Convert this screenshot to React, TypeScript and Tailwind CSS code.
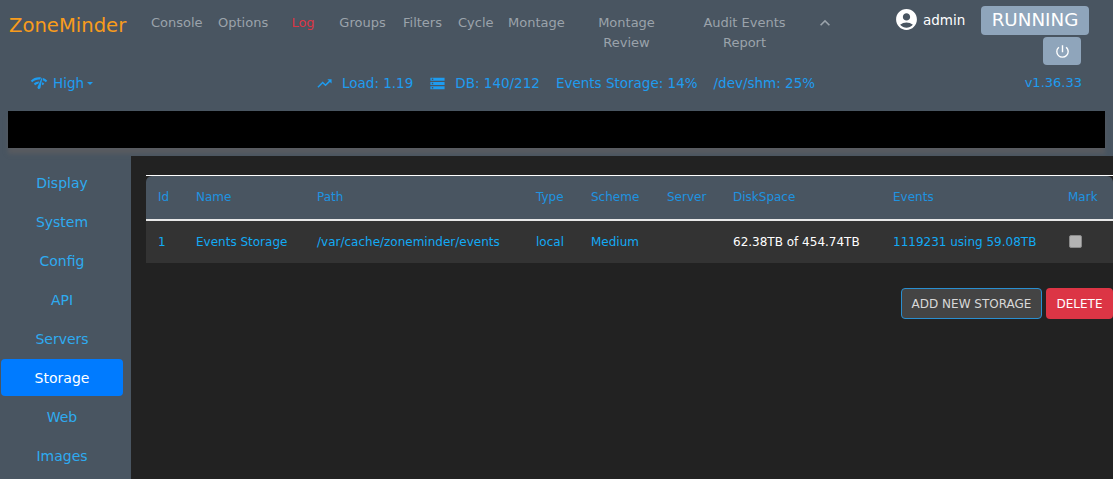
import { MdAccountCircle, MdExpandLess, MdNetworkCheck, MdPowerSettingsNew, MdStorage, MdTrendingUp } from "react-icons/md";

const navItems = [
  { label: "Console", cls: "w-[67px] text-[#9ba3ab]" },
  { label: "Options", cls: "w-[66px] text-[#9ba3ab]" },
  { label: "Log", cls: "w-[54px] text-[#dc3545]" },
  { label: "Groups", cls: "w-[65px] text-[#9ba3ab]" },
  { label: "Filters", cls: "w-[55px] text-[#9ba3ab]" },
  { label: "Cycle", cls: "w-[50px] text-[#9ba3ab]" },
  { label: "Montage", cls: "w-[72px] text-[#9ba3ab]" },
  { label: "Montage Review", cls: "w-[109px] text-[#9ba3ab]" },
  { label: "Audit Events Report", cls: "w-[127px] text-[#9ba3ab]" },
];

const sideItems = ["Display", "System", "Config", "API", "Servers", "Storage", "Web", "Images"];

const columns = [
  { label: "Id", cls: "w-[38px]" },
  { label: "Name", cls: "w-[121px]" },
  { label: "Path", cls: "w-[219px]" },
  { label: "Type", cls: "w-[55px]" },
  { label: "Scheme", cls: "w-[76px]" },
  { label: "Server", cls: "w-[66px]" },
  { label: "DiskSpace", cls: "w-[160px]" },
  { label: "Events", cls: "w-[175px]" },
  { label: "Mark", cls: "w-[57px]" },
];

const App = () => {
  return (
    <div className="w-[1113px] h-[479px] overflow-hidden bg-[#495561] text-[13px] font-['DejaVu_Sans',sans-serif]">
      <div className="h-[66px] flex">
        <div className="w-[143px] pl-[9px] pt-[13px] text-[19.6px] leading-[26px] text-[#f89c1c]">ZoneMinder</div>
        <div className="w-[753px] flex items-start pt-[13px]">
          {navItems.map((item) => (
            <div key={item.label} className={`${item.cls} shrink-0 px-2 text-center leading-[20px]`}>
              {item.label}
            </div>
          ))}
          <MdExpandLess className="ml-[7px] text-[#9ba3ab] shrink-0" size={20} />
        </div>
        <div className="flex-1 pt-[6px] pr-[24px] flex flex-col items-end gap-[2px]">
          <div className="flex items-center w-full">
            <MdAccountCircle className="text-white shrink-0 -mt-[2px] -ml-[2px]" size={25} />
            <span className="ml-[4px] mr-auto text-white text-[13.5px] -mt-[1px]">admin</span>
            <div className="h-[29px] w-[108px] rounded-[4px] bg-[#8fa5bb] text-white text-[18.3px] leading-[27px] text-center">RUNNING</div>
          </div>
          <div className="mr-[8px] h-[28px] w-[38px] rounded-[4px] bg-[#8fa5bb] flex items-center justify-center">
            <MdPowerSettingsNew className="text-white" size={17} />
          </div>
        </div>
      </div>

      <div className="h-[34px] flex items-center text-[#1e9cf0] text-[13.5px]">
        <div className="w-[316px] pl-[30px] flex items-center">
          <MdNetworkCheck size={18} />
          <span className="ml-[5px]">High</span>
          <span className="ml-[3px] border-x-[3px] border-t-[3px] border-x-transparent border-t-[#1e9cf0]"></span>
        </div>
        <div className="flex items-center flex-1">
          <MdTrendingUp size={17} />
          <span className="ml-[9px]">Load: 1.19</span>
          <MdStorage className="ml-[16px]" size={17} />
          <span className="ml-[9px]">DB: 140/212</span>
          <span className="ml-[16px]">Events Storage: 14%</span>
          <span className="ml-[16px]">/dev/shm: 25%</span>
        </div>
        <div className="pr-[31px] text-[13px]">v1.36.33</div>
      </div>

      <div className="h-[56px] pt-[11px] px-[8px]">
        <div className="h-[37px] bg-black shadow-[0_6px_4px_#585b60]"></div>
      </div>

      <div className="flex h-[323px]">
        <div className="w-[131px] shrink-0 pt-[8px] pl-[1px]">
          {sideItems.map((item) => (
            <div
              key={item}
              className={`w-[122px] h-[37px] mb-[2px] rounded-[4px] flex items-center justify-center text-[14px] pt-[1px] ${
                item === "Storage" ? "bg-[#007bff] text-white" : "text-[#2eabf0]"
              }`}
            >
              {item}
            </div>
          ))}
        </div>

        <div className="flex-1 bg-[#222222] pt-[19px] pl-[15px] text-[12px]">
          <div className="border-t border-white">
            <table className="table-fixed w-[967px] border-collapse">
              <thead>
                <tr className="h-[44px] text-[#1e93e0] border-b-2 border-[#e8e8e8]">
                  {columns.map((col, i) => (
                    <th
                      key={col.label}
                      className={`${col.cls} px-3 pb-[2px] text-left font-normal bg-[#495561] ${i === 0 ? "rounded-tl-[6px]" : ""} ${i === columns.length - 1 ? "rounded-tr-[6px]" : ""}`}
                    >
                      {col.label}
                    </th>
                  ))}
                </tr>
              </thead>
              <tbody>
                <tr className="h-[43px] bg-[#333333] text-[#12aaf5] whitespace-nowrap">
                  <td className="px-3">1</td>
                  <td className="px-3">Events Storage</td>
                  <td className="px-3">/var/cache/zoneminder/events</td>
                  <td className="px-3">local</td>
                  <td className="px-3">Medium</td>
                  <td className="px-3"></td>
                  <td className="px-3 text-white">62.38TB of 454.74TB</td>
                  <td className="px-3">1119231 using 59.08TB</td>
                  <td className="px-3">
                    <div className="w-[13px] h-[13px] ml-[1px] rounded-[2px] bg-[#b3b3b3] border border-[#8a8a8a] -mt-[2px]"></div>
                  </td>
                </tr>
              </tbody>
            </table>
          </div>
          <div className="flex justify-end gap-[4px] mt-[25px]">
            <button className="h-[31px] w-[141px] rounded-[4px] border border-[#2a8fd0] bg-[#444444] text-[#d8d8d8]">ADD NEW STORAGE</button>
            <button className="h-[31px] w-[67px] rounded-[4px] bg-[#dc3545] text-white">DELETE</button>
          </div>
        </div>
      </div>
    </div>
  );
};

export default App;
